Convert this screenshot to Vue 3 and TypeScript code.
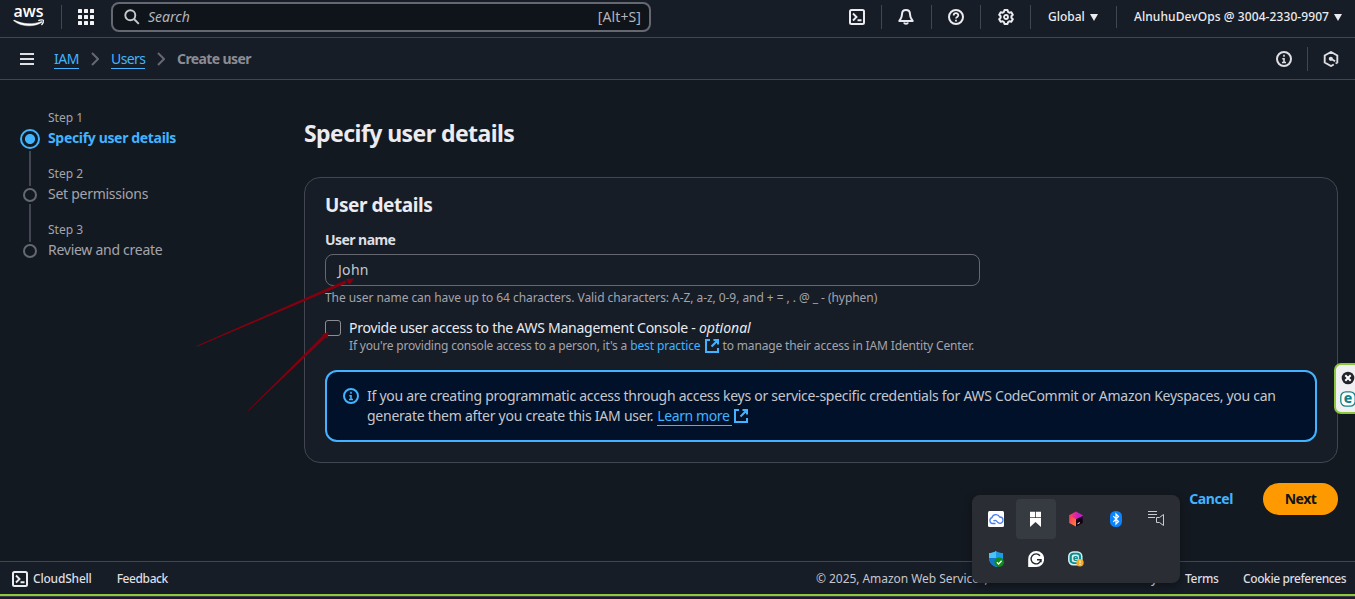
<script setup lang="ts">
import { ref } from 'vue'

interface Step {
  label: string
  title: string
  cls: string
}

const steps: Step[] = [
  { label: 'Step 1', title: 'Specify user details', cls: 'active' },
  { label: 'Step 2', title: 'Set permissions', cls: 'middle' },
  { label: 'Step 3', title: 'Review and create', cls: 'last' },
]
const userName = ref('John')
const gridCells = [0, 6, 12]
</script>

<template>
  <div class="app">
    <header class="topbar">
      <svg class="aws" viewBox="0 0 32 22" width="32" height="22">
        <text x="0.5" y="11.400" class="aws-word" textLength="30" lengthAdjust="spacingAndGlyphs">aws</text>
        <path d="M.5 14.600C8 20.900 20.500 21.500 29.300 16.200L28.800 15.400C20 19 9.500 18.300 1 14.100Z" fill="#fff" stroke="#fff" stroke-width=".5" />
        <path d="M25.300 14.600c2-1 4.900-1 5.100-.3s-.4 3-1.900 4.700" fill="none" stroke="#fff" stroke-width="1.200" />
      </svg>
      <i class="sep"></i>
      <svg class="apps" viewBox="0 0 16 16" width="16" height="16" fill="#f4f4f6">
        <template v-for="y in gridCells" :key="y">
          <rect v-for="x in gridCells" :key="x" :x="x" :y="y" width="4" height="4" rx=".6" />
        </template>
      </svg>
      <div class="search">
        <svg viewBox="0 0 16 16" width="16" height="16" fill="none" stroke="#c8c8cf" stroke-width="1.900">
          <circle cx="6.300" cy="6.300" r="5" />
          <path d="M10 10l4.800 4.800" />
        </svg>
        <span class="t ph">Search</span>
        <span class="t key">[Alt+S]</span>
      </div>
      <div class="tools">
        <span class="tool">
          <svg viewBox="0 0 16 16" width="16" height="16" fill="none" stroke="#ebebf0" stroke-width="2">
            <rect x="1" y="1" width="14" height="14" rx="1.500" />
            <path d="M4 4.500L7.500 8 4 11.500M8.500 11.200H12.500" stroke-width="1.900" />
          </svg>
        </span>
        <span class="tool bell">
          <svg viewBox="0 0 16 16" width="16" height="16" fill="none" stroke="#ebebf0" stroke-width="2" stroke-linejoin="round">
            <path d="M8 1C5.200 1 4 3 4 5.300C4 8.500 2.800 9.500 1.300 12H14.700C13.200 9.500 12 8.500 12 5.300C12 3 10.800 1 8 1Z" />
            <path d="M6 13.500c.5 1.600 3.500 1.600 4 0" />
          </svg>
        </span>
        <span class="tool narrow">
          <svg viewBox="0 0 16 16" width="16" height="16" fill="none" stroke="#ebebf0" stroke-width="2">
            <circle cx="8" cy="8" r="7" />
            <path d="M5.700 6.500c0-3 4.600-3 4.600-.2C10.300 8 8 7.800 8 9.600M8 10.800v1.800" stroke-width="1.800" />
          </svg>
        </span>
        <span class="tool">
          <svg viewBox="0 0 16 16" width="16" height="16" fill="none" stroke="#ebebf0" stroke-width="2" stroke-linejoin="round">
            <path d="M6.500 1H9.500L10.100 3 11.300 3.700 13.300 3.200 14.800 5.800 13.400 7.300V8.700L14.800 10.200 13.300 12.800 11.300 12.300 10.100 13 9.500 15H6.500L5.900 13 4.700 12.300 2.700 12.800 1.200 10.200 2.600 8.700V7.300L1.200 5.800 2.700 3.200 4.700 3.700 5.900 3Z" />
            <circle cx="8" cy="8" r="2" stroke-width="1.800" />
          </svg>
        </span>
        <span class="menu region"><span class="t">Global</span><i class="caret"></i></span>
        <span class="menu account"><span class="t">AlnuhuDevOps @ 3004-2330-9907</span><i class="caret"></i></span>
      </div>
    </header>

    <nav class="crumbs">
      <i class="burger"><b></b><b></b><b></b></i>
      <a class="t c1">IAM</a>
      <svg class="chev" viewBox="0 0 8 14" width="8" height="14"><path d="M1 1l6 6-6 6" /></svg>
      <a class="t c2">Users</a>
      <svg class="chev" viewBox="0 0 8 14" width="8" height="14"><path d="M1 1l6 6-6 6" /></svg>
      <span class="t c3">Create user</span>
      <div class="crumb-tools">
        <svg viewBox="0 0 16 16" width="16" height="16" fill="none" stroke="#dedee3" stroke-width="2">
          <circle cx="8" cy="8" r="7" />
          <path d="M8 3.800v1.900M6.300 7.700H8v4M6 11.500h4" stroke-width="1.600" />
        </svg>
        <i class="sep"></i>
        <svg viewBox="0 0 16 16" width="16" height="16" fill="none" stroke="#dedee3" stroke-width="1.900">
          <path d="M10.800 13.500L8 15 1.700 11.500v-7L8 1l6.300 3.500v7L12.600 12.500M7.500 7.500l4.600 2.800" />
          <circle cx="7.800" cy="7.800" r="2.100" fill="#dedee3" stroke="none" />
        </svg>
      </div>
    </nav>

    <main class="main">
      <ol class="steps">
        <li v-for="s in steps" :key="s.label" class="step" :class="s.cls">
          <div class="rail"><i class="dot"></i><i v-if="s.cls !== 'last'" class="line"></i></div>
          <div>
            <div class="step-label"><span class="t">{{ s.label }}</span></div>
            <div class="step-title"><span class="t">{{ s.title }}</span></div>
          </div>
        </li>
      </ol>

      <section class="content">
        <h1><span class="t">Specify user details</span></h1>
        <div class="card">
          <h2><span class="t">User details</span></h2>
          <div class="label"><span class="t">User name</span></div>
          <div class="field"><span class="t">{{ userName }}</span></div>
          <div class="hint"><span class="t">The user name can have up to 64 characters. Valid characters: A-Z, a-z, 0-9, and + = , . @ _ - (hyphen)</span></div>
          <div class="check">
            <i class="box"></i>
            <div>
              <div class="check-title"><span class="t k1">Provide user access to the AWS Management Console - </span><em class="t">optional</em></div>
              <div class="check-desc">
                <span class="t d1">If you're providing console access to a person, it's a</span>
                <a class="t d2">best practice</a>
                <svg class="ext" viewBox="0 0 14 14" width="14" height="14"><path d="M5 1H1v12h12V9M8.500 1H13v4.500M13 1L6.500 7.500" /></svg>
                <span class="t d3">to manage their access in IAM Identity Center.</span>
              </div>
            </div>
          </div>
          <div class="alert">
            <svg viewBox="0 0 16 16" width="16" height="16" fill="none" stroke="#42b4ff" stroke-width="2">
              <circle cx="8" cy="8" r="7" />
              <path d="M8 3.800v1.900M6.300 7.700H8v4M6 11.500h4" stroke-width="1.600" />
            </svg>
            <div>
              <div class="alert-row"><span class="t a1">If you are creating programmatic access through access keys or service-specific credentials for AWS CodeCommit or Amazon Keyspaces, you can</span></div>
              <div class="alert-row">
                <span class="t a2">generate them after you create this IAM user.</span>
                <a class="t a3">Learn more</a>
                <svg class="ext" viewBox="0 0 14 14" width="14" height="14"><path d="M5 1H1v12h12V9M8.500 1H13v4.500M13 1L6.500 7.500" /></svg>
              </div>
            </div>
          </div>
        </div>
        <div class="actions">
          <a class="cancel"><span class="t">Cancel</span></a>
          <button class="next"><span class="t">Next</span></button>
        </div>
      </section>
    </main>

    <footer class="footer">
      <svg viewBox="0 0 16 16" width="16" height="16" fill="none" stroke="#ebebf0" stroke-width="2">
        <rect x="1" y="1" width="14" height="14" rx="1.500" />
        <path d="M4 4.500L7.500 8 4 11.500M8.500 11.200H12.500" stroke-width="1.900" />
      </svg>
      <span class="t f1">CloudShell</span>
      <span class="t f2">Feedback</span>
      <div class="legal">
        <span class="t f3">© 2025, Amazon Web Services, Inc. or its affiliates.</span>
        <span class="t f4">Privacy</span>
        <span class="t f5">Terms</span>
        <span class="t f6">Cookie preferences</span>
      </div>
    </footer>
    <div class="edge"></div>

    <!-- hand-drawn pointer arrows -->
    <svg class="arrows" viewBox="0 0 1355 599" width="1355" height="599" fill="#85000f">
      <path d="M197 345.800L345.600 280.300L346.600 283.300L197.200 346.500Z" />
      <path d="M197 346.200L250 323" stroke="#85000f" stroke-width=".5" />
      <path d="M354 278.500L350 284.500L347.800 282.500L346.200 279Z" />
      <path d="M248 410.500L323.400 335.300L325.700 337.600L248.300 410.900Z" />
      <path d="M328.500 332L327.500 338.500L325.500 337.500L322.500 335.500L322.800 334Z" />
    </svg>

    <!-- side widget -->
    <div class="widget">
      <svg viewBox="0 0 14 14" width="14" height="14">
        <circle cx="7" cy="7" r="6.300" fill="#23232b" />
        <path d="M4.300 4.300l5.400 5.400M9.700 4.300L4.300 9.700" stroke="#fff" stroke-width="2" />
      </svg>
      <svg viewBox="0 0 16 16" width="16" height="16">
        <rect x=".8" y=".8" width="14.400" height="14.400" rx="5" fill="#fff" stroke="#0f8288" stroke-width="1.300" />
        <text x="8" y="12" class="e-mark big">e</text>
      </svg>
    </div>

    <!-- system tray flyout -->
    <div class="tray">
      <span class="cell">
        <svg viewBox="0 0 16 16" width="16" height="16">
          <rect width="16" height="16" rx="1.500" fill="#fff" />
          <path d="M7.500 12.500H4.500a3 3 0 0 1-.6-5.800A4.200 4.200 0 0 1 11.700 6a3.200 3.200 0 0 1 .2 6.400c-1.900 0-2.500-1.400-3.300-2.300A2 2 0 0 0 5.500 10.200" fill="none" stroke="#4a7df0" stroke-width="1.300" />
        </svg>
      </span>
      <span class="cell hover">
        <svg viewBox="0 0 16 16" width="16" height="16" fill="#fff">
          <path d="M2 .800H7.200V6.300H2ZM8 .800H13V6.300H8ZM2 7.100H13V16L7.500 11L2 16Z" />
        </svg>
      </span>
      <span class="cell">
        <svg viewBox="0 0 16 16" width="16" height="16">
          <defs>
            <linearGradient id="cubeTop" x1="0" y1="0" x2="1" y2="0"><stop offset="0" stop-color="#ff4a4a" /><stop offset=".6" stop-color="#d01fb8" /><stop offset="1" stop-color="#b41fe0" /></linearGradient>
            <linearGradient id="cubeLeft" x1="0" y1="0" x2="1" y2="1"><stop offset="0" stop-color="#ff2f6d" /><stop offset="1" stop-color="#ff8a2a" /></linearGradient>
          </defs>
          <path d="M1.200 4.300L8 .600L14.800 4.300V8L8 9L1.200 5Z" fill="url(#cubeTop)" />
          <path d="M1.200 4.300L8 8.300V15.600L1.200 12Z" fill="url(#cubeLeft)" />
          <path d="M8 8.300L14.800 5V12L8 15.600Z" fill="#160013" />
          <path d="M9.500 12.800l2.300-1.200" stroke="#fff" stroke-width="1" />
        </svg>
      </span>
      <span class="cell">
        <svg viewBox="0 0 16 16" width="16" height="16">
          <rect x="2" y="0" width="12" height="16" rx="5.500" fill="#0a84ff" />
          <path d="M5.300 5.200l5.200 5.300L8 13V3l2.500 2.500-5.200 5.300" fill="none" stroke="#fff" stroke-width="1.200" />
        </svg>
      </span>
      <span class="cell">
        <svg viewBox="0 0 16 16" width="16" height="16" fill="none" stroke="#c9cbce" stroke-width="1">
          <path d="M0 .500H9M0 3.500H9M0 6.500H7M0 8.500" />
          <path d="M8.500 6.500H11.500L15.500 3.500V14.500L11.500 11.500H8.500Z" />
        </svg>
      </span>
      <span class="cell">
        <svg viewBox="0 0 16 16" width="16" height="16">
          <path d="M8 0C10 1.600 12.500 2 15 2V7c0 4.500-3 7.200-7 9C4 14.200 1 11.500 1 7V2C3.500 2 6 1.600 8 0Z" fill="#1d9be8" />
          <path d="M8 0C6 1.600 3.500 2 1 2V7H8Z" fill="#4cc2f5" />
          <path d="M8 7H1c0 4.500 3 7.200 7 9Z" fill="#1377c9" />
          <circle cx="11.200" cy="11.200" r="4.800" fill="#128a1c" />
          <path d="M8.900 11.300l1.700 1.700 3-3.200" fill="none" stroke="#fff" stroke-width="1.300" />
        </svg>
      </span>
      <span class="cell">
        <svg viewBox="0 0 16 16" width="16" height="16">
          <path d="M8.200 0a7.900 7.900 0 1 1 0 16H.2V8A8 8 0 0 1 8.200 0Z" fill="#fff" />
          <path d="M12 4.800A5 5 0 1 0 13 8.700H9M13 8.200v3" fill="none" stroke="#24272c" stroke-width="1.400" />
        </svg>
      </span>
      <span class="cell">
        <svg viewBox="0 0 16 16" width="16" height="16">
          <rect x=".8" y=".9" width="13" height="12.800" rx="4.500" fill="#0a8b90" stroke="#d5f1f0" stroke-width="1.500" />
          <rect x="3.800" y="3.400" width="7.200" height="7.800" rx="2" fill="#d5f1f0" />
          <text x="7.400" y="10.400" class="e-mark small">e</text>
          <circle cx="12" cy="11.800" r="3.700" fill="#f9a91f" />
          <path d="M12 9.500v2.800M12 13v1.100" stroke="#fff" stroke-width="1.100" />
        </svg>
      </span>
    </div>
  </div>
</template>

<style>
body { margin: 0; background: #131920; overflow: hidden; }
</style>

<style scoped>
* { box-sizing: border-box; }
.app {
  position: relative; width: 1355px; height: 599px; overflow: hidden;
  display: flex; flex-direction: column;
  font-family: "Noto Sans", "Open Sans", sans-serif; font-size: 14px; line-height: 20px;
  background: #131920; color: #c6c6cd;
}
.t { display: block; white-space: pre; flex: none; }
svg { display: block; flex: none; }
a { color: #42b4ff; }
.sep { width: 1px; height: 24px; background: #424650; flex: none; }

.topbar { flex: none; height: 38px; padding: 0 0 3px 13px; display: flex; align-items: center; background: #161d26; border-bottom: 1px solid #424650; }
.aws { overflow: visible; }
.aws-word { font-family: "Open Sans", sans-serif; font-weight: 600; font-size: 17px; fill: #fff; }
.topbar > .sep { margin: 0 16px; }
.search { width: 540px; height: 30px; margin-left: 17px; padding: 0 8px 0 11px; display: flex; align-items: center; background: #0f141a; border: 2px solid #656871; border-radius: 8px; }
.ph { margin-left: 8px; font-style: italic; color: #b4b4bb; }
.key { margin-left: auto; color: #b4b4bb; letter-spacing: .1px; }
.tools { margin-left: 181px; display: flex; align-items: center; font-size: 12px; font-weight: 500; color: #ebebf0; }
.tool { width: 50px; height: 24px; display: flex; align-items: center; justify-content: center; border-right: 1px solid #424650; }
.tool.bell { padding-right: 1px; }
.tool.narrow { width: 49px; }
.menu { height: 22px; display: flex; align-items: center; padding-left: 17px; }
.region { width: 86px; border-right: 1px solid #424650; }
.account { letter-spacing: .08px; }
.caret { width: 0; height: 0; border: 4.500px solid transparent; border-top: 7px solid #ebebf0; border-bottom: 0; margin-left: 5px; }

.crumbs { flex: none; height: 42px; padding: 0 16px 0 20px; display: flex; align-items: center; background: #161d26; border-bottom: 1px solid #424650; }
.burger { width: 14px; height: 12px; display: flex; flex-direction: column; justify-content: space-between; margin-right: 20px; }
.burger b { height: 2px; background: #dedee3; }
.crumbs a { height: 21px; line-height: 22px; border-bottom: 1px solid #42b4ff; }
.c1 { width: 25px; letter-spacing: -.5px; }
.c2 { width: 34px; letter-spacing: -.6px; }
.c3 { font-weight: 700; color: #8c8c94; letter-spacing: -.6px; }
.chev { margin: 0 12px; fill: none; stroke: #656871; stroke-width: 2; }
.crumb-tools { margin-left: auto; display: flex; align-items: center; gap: 15px; }

.main { flex: 1; min-height: 0; display: flex; }
.steps { list-style: none; margin: 0; padding: 28px 0 0 20px; width: 304px; flex: none; }
.step { display: flex; gap: 8px; height: 56px; }
.rail { width: 20px; display: flex; flex-direction: column; align-items: center; padding-top: 24px; }
.dot { width: 14px; height: 14px; border: 2px solid #656871; border-radius: 50%; flex: none; }
.line { width: 2px; height: 38px; margin-top: 2px; background: #424650; flex: none; }
.active .rail { padding-top: 21px; }
.active .dot { width: 20px; height: 20px; border-color: #42b4ff; background: radial-gradient(circle, #42b4ff 4.600px, transparent 5.400px); }
.active .line { height: 35px; }
.step-label { height: 20px; font-size: 12px; color: #a4a4ad; }
.step-title { color: #a4a4ad; letter-spacing: -.27px; }
.active .step-title { color: #42b4ff; font-weight: 700; letter-spacing: -.34px; }

.content { width: 1034px; }
h1, h2 { margin: 0; color: #ebebf0; font-weight: 700; }
h1 { padding-top: 37px; height: 97px; font-size: 23px; line-height: 32px; letter-spacing: -.56px; }
.card { height: 286px; padding: 15px 20px 0; background: #161d26; border: 1px solid #424650; border-radius: 16px; }
h2 { height: 37px; font-size: 19px; line-height: 24px; letter-spacing: -.44px; }
.label { height: 24px; color: #dedee3; font-weight: 700; letter-spacing: -.55px; }
.field { width: 655px; height: 32px; padding: 5px 12px; border: 1px solid #656871; border-radius: 8px; letter-spacing: .3px; }
.hint { padding-top: 2px; font-size: 12px; color: #a4a4ad; letter-spacing: -.06px; }
.check { display: flex; gap: 8px; padding-top: 10px; }
.box { width: 16px; height: 16px; margin-top: 2px; border: 1px solid #8c8c94; border-radius: 3px; }
.check-title { display: flex; color: #ebebf0; }
.k1 { letter-spacing: -.26px; }
.check-desc { display: flex; align-items: center; height: 16px; font-size: 12px; color: #a4a4ad; }
.d1 { letter-spacing: -.18px; margin-right: 3px; }
.d2 { letter-spacing: -.12px; margin-right: 5px; }
.d3 { letter-spacing: -.15px; margin-left: 3px; }
.ext { fill: none; stroke: #42b4ff; stroke-width: 2; }
.alert { margin-top: 16px; height: 72px; display: flex; gap: 8px; padding: 14px 16px; background: #001129; border: 2px solid #42b4ff; border-radius: 12px; }
.alert > svg { margin-top: 2px; }
.alert-row { display: flex; align-items: center; height: 20px; }
.a1 { letter-spacing: -.27px; }
.a2 { letter-spacing: -.24px; margin-right: 4px; }
.a3 { width: 75px; height: 20px; border-bottom: 1px solid #42b4ff; letter-spacing: -.4px; margin-right: 2px; }
.actions { margin-top: 20px; height: 32px; display: flex; justify-content: flex-end; align-items: center; font-weight: 700; }
.cancel { letter-spacing: -.4px; margin-right: 30px; }
.next { width: 75px; height: 32px; padding: 0; display: flex; align-items: center; justify-content: center; border: 0; border-radius: 16px; background: #ff9900; color: #0f141a; font: inherit; letter-spacing: -.5px; }

.footer { flex: none; height: 33px; padding: 1px 9px 0 12px; display: flex; align-items: center; font-size: 12px; font-weight: 500; background: #161d26; border-top: 1px solid #424650; color: #dedee3; }
.f1 { margin-left: 5px; letter-spacing: -.2px; }
.f2 { margin-left: 25px; letter-spacing: -.4px; }
.legal { margin-left: auto; display: flex; width: 530px; }
.f3 { width: 301px; font-weight: 400; color: #c6c6cd; letter-spacing: -.05px; }
.f4 { width: 68px; letter-spacing: -.1px; }
.f5 { width: 58px; letter-spacing: -.3px; }
.f6 { letter-spacing: -.4px; }
.edge { flex: none; height: 5px; background: linear-gradient(#8fc73e 0 2px, #3a3b45 2px 3px, #1c1c31 3px); }

.arrows { position: absolute; inset: 0; }
.widget { position: absolute; left: 1334px; top: 363px; width: 30px; height: 51px; padding: 6px 0 0 5px; background: #f0f0f2; border: 2px solid #8dc63f; border-radius: 7px; display: flex; flex-direction: column; gap: 6px; }
.widget svg + svg { margin-left: -1px; }
.e-mark { font-family: "Noto Sans", sans-serif; font-weight: 800; text-anchor: middle; }
.big { font-size: 14px; line-height: 14px; fill: #0f8288; }
.small { font-size: 9px; fill: #0a8b90; }
.tray { position: absolute; left: 972px; top: 495px; width: 208px; height: 88px; padding: 4px; display: grid; grid-template-columns: repeat(5, 40px); grid-auto-rows: 40px; background: #2a2e34; border-radius: 8px; box-shadow: 0 3px 8px rgba(0, 0, 0, .35); }
.cell { display: flex; align-items: center; justify-content: center; border-radius: 4px; }
.hover { background: #363a41; }
</style>
